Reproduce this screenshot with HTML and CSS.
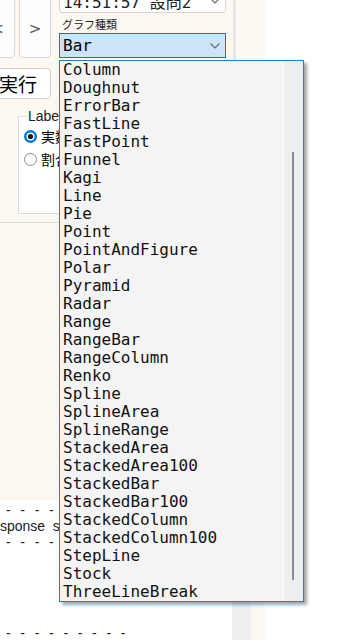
FILE: index.html
```html
<!DOCTYPE html>
<html lang="ja">

<head>
  <meta charset="UTF-8">
  <meta name="viewport" content="width=device-width, initial-scale=1.0">
  <title>グラフ</title>
  <link rel="stylesheet" href="styles.css">
</head>

<body>

  <div class="app">
    <div class="left">
      <div class="panel">
        <div class="controls">
          <div class="toolbar">
            <button class="nav prev">&lt;</button>
            <button class="nav next">&gt;</button>
            <div class="pickers">
              <div class="combo time">
                <span>14:51:57 設問2</span>
                <svg class="chev" width="10" height="6" viewBox="0 0 10 6"><path d="M0.5 0.5 L5 5 L9.5 0.5" fill="none" stroke="#6d6d6d" stroke-width="1.2"/></svg>
              </div>
              <div class="caption">グラフ種類</div>
              <div class="combo chart">
                <span>Bar</span>
                <svg class="chev" width="10" height="6" viewBox="0 0 10 6"><path d="M0.5 0.5 L5 5 L9.5 0.5" fill="none" stroke="#6d6d6d" stroke-width="1.2"/></svg>
              </div>
            </div>
          </div>

          <button class="run">実行</button>

          <fieldset class="labels">
            <legend>Label</legend>
            <div class="radio-row">
              <svg width="13" height="13" viewBox="0 0 13 13">
                <circle cx="6.5" cy="6.5" r="6.5" fill="#0078d7"/>
                <circle cx="6.5" cy="6.5" r="4" fill="#fff"/>
                <circle cx="6.5" cy="6.5" r="2.6" fill="#1b1b1b"/>
              </svg>
              <span>実数</span>
            </div>
            <div class="radio-row">
              <svg width="13" height="13" viewBox="0 0 13 13">
                <circle cx="6.5" cy="6.5" r="6" fill="#fff" stroke="#8a8a8a" stroke-width="1"/>
              </svg>
              <span>割合</span>
            </div>
          </fieldset>

          <div class="sep"></div>
        </div>
      </div>

      <div class="log">
        <div class="log-text">
          <div class="line dash">- - - - - - - - - - - - - - -</div>
          <div class="line cut">Response  status: 200</div>
          <div class="line dash">- - - - - - - - - - - - - - -</div>
          <div class="line dash last">- - - - - - - - -</div>
        </div>
        <div class="log-scroll"></div>
      </div>
    </div>
    <div class="strip"></div>
    <div class="blank"></div>
  </div>

  <!-- open list of the chart type combo -->
  <div class="dropdown">
    <ul class="items">
      <li>Column</li>
      <li>Doughnut</li>
      <li>ErrorBar</li>
      <li>FastLine</li>
      <li>FastPoint</li>
      <li>Funnel</li>
      <li>Kagi</li>
      <li>Line</li>
      <li>Pie</li>
      <li>Point</li>
      <li>PointAndFigure</li>
      <li>Polar</li>
      <li>Pyramid</li>
      <li>Radar</li>
      <li>Range</li>
      <li>RangeBar</li>
      <li>RangeColumn</li>
      <li>Renko</li>
      <li>Spline</li>
      <li>SplineArea</li>
      <li>SplineRange</li>
      <li>StackedArea</li>
      <li>StackedArea100</li>
      <li>StackedBar</li>
      <li>StackedBar100</li>
      <li>StackedColumn</li>
      <li>StackedColumn100</li>
      <li>StepLine</li>
      <li>Stock</li>
      <li>ThreeLineBreak</li>
    </ul>
    <div class="track">
      <div class="thumb"></div>
    </div>
  </div>

</body>

</html>
```

FILE: styles.css
```css
/* Reset styles */
* {
  margin: 0;
  padding: 0;
  box-sizing: border-box;
}

html,
body {
  width: 360px;
  height: 640px;
  overflow: hidden;
}

body {
  font-family: "Noto Sans CJK JP", "Liberation Sans", sans-serif;
  background-color: #fff;
  color: #000;
  position: relative;
}

/* Window layout */
.app {
  display: grid;
  grid-template-columns: 251px 14px 1fr;
  height: 640px;
}

.left {
  display: flex;
  flex-direction: column;
  min-height: 0;
}

.panel {
  height: 500px;
  flex-shrink: 0;
  background-color: #fef8f3;
}

.controls {
  width: 236px;
  height: 100%;
  border-right: 3px solid #e8e6e4;
}

.strip {
  background-color: #fef8f3;
}

.blank {
  background-color: #fff;
}

/* Top row */
.toolbar {
  display: flex;
  margin-top: -12px;
  height: 70px;
}

.nav {
  height: 70px;
  background-color: #fdfdfd;
  border: 1px solid #d6d6d6;
  border-radius: 4px;
  font-family: "DejaVu Sans", sans-serif;
  font-size: 15px;
  color: #555;
  padding-top: 12px;
}

.prev {
  width: 35px;
  margin-left: -20px;
}

.next {
  width: 32px;
  margin-left: 4px;
}

.pickers {
  width: 167px;
  margin-left: 8px;
  display: flex;
  flex-direction: column;
}

.combo {
  height: 25px;
  display: flex;
  align-items: center;
  justify-content: space-between;
  padding: 0 5px 0 3px;
  font-family: "DejaVu Sans Mono", "Noto Sans CJK JP", monospace;
  font-size: 16px;
}

.time {
  background-color: #fff;
  border: 1px solid #d4d4d4;
  border-radius: 3px;
  color: #222;
}

.chart {
  background-color: #cce4f7;
  border: 1px solid #0078d7;
}

.chev {
  flex-shrink: 0;
}

.caption {
  height: 20px;
  padding: 5px 0 0 3px;
  font-size: 11px;
  line-height: 13px;
  color: #222;
}

/* Run button */
.run {
  display: block;
  width: 71px;
  height: 31px;
  margin: 10px 0 0 -20px;
  background-color: #fff;
  border: 1px solid #cfcfcf;
  border-radius: 4px;
  font-family: "Noto Sans CJK JP", sans-serif;
  font-size: 19px;
  line-height: 26px;
  color: #000;
  text-align: left;
  padding-left: 18px;
}

/* Label group */
.labels {
  margin: 10px 7px 0 18px;
  padding: 4px 0 45px 8px;
  border: 1px solid #dcdcdc;
  background-color: #fff;
}

.labels legend {
  padding: 0 1px;
  font-family: "Liberation Sans", sans-serif;
  font-size: 14px;
  line-height: 14px;
  color: #222;
}

.radio-row {
  display: flex;
  align-items: center;
  gap: 4px;
  height: 18px;
  margin-left: -3px;
  font-size: 14px;
}

.radio-row + .radio-row {
  margin-top: 5px;
}

.sep {
  height: 1px;
  margin-top: 8px;
  background-color: #e2dcd7;
}

/* Output log */
.log {
  flex: 1;
  display: grid;
  grid-template-columns: 232px 19px;
  min-height: 0;
}

.log-text {
  padding: 2px 0 0 6px;
  font-family: "Liberation Sans", sans-serif;
  font-size: 14px;
  line-height: 16px;
  color: #222;
  overflow: hidden;
}

.line {
  height: 16px;
  white-space: pre;
}

.dash {
  letter-spacing: 2.9px;
}

.cut {
  margin-left: -24px;
}

.last {
  margin-top: 75px;
}

.log-scroll {
  background-color: #efefef;
}

/* Dropdown list */
.dropdown {
  position: absolute;
  left: 59px;
  top: 60px;
  width: 245px;
  height: 542px;
  display: flex;
  background-color: #f4f4f4;
  border: 1px solid #1f7fd3;
  box-shadow: 3px 3px 3px rgba(0, 0, 0, 0.35);
}

.items {
  flex: 1;
  list-style-type: none;
  font-family: "DejaVu Sans Mono", monospace;
  font-size: 16px;
  color: #111;
}

.items li {
  height: 18px;
  line-height: 18px;
  padding-left: 3px;
}

.track {
  width: 20px;
  background-color: #eeeeee;
  border-left: 1px solid #fbfbfb;
}

.thumb {
  width: 2px;
  height: 428px;
  margin: 91px 0 0 8px;
  background-color: #8c8c8c;
}
```
